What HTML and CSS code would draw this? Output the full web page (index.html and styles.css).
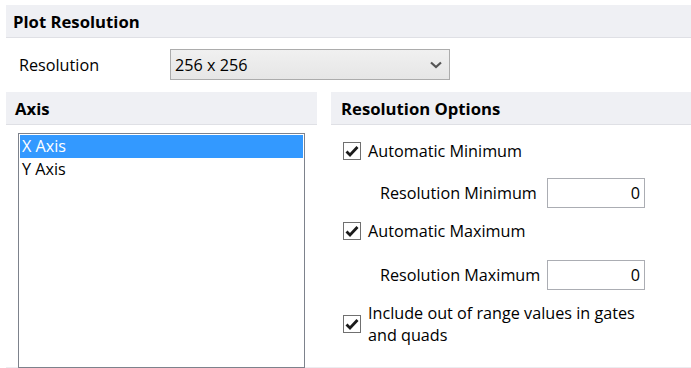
FILE: index.html
```html
<!DOCTYPE html>
<html>
<head>
<meta charset="utf-8">
<link rel="stylesheet" href="styles.css">
</head>
<body>
<div class="panel">
  <div class="hdr hdr-main">Plot Resolution</div>
  <div class="res-row">
    <span class="res-label">Resolution</span>
    <div class="select">
      <span>256 x 256</span>
      <svg class="chev" width="12" height="8" viewBox="0 0 12 8"><path d="M1 1.5 L6 6 L11 1.5" fill="none" stroke="#555" stroke-width="2.2"/></svg>
    </div>
  </div>
  <div class="cols">
    <div class="col-left">
      <div class="hdr hdr-axis">Axis</div>
      <div class="list">
        <div class="item selected">X Axis</div>
        <div class="item">Y Axis</div>
      </div>
    </div>
    <div class="col-right">
      <div class="hdr hdr-opts">Resolution Options</div>
      <div class="check-row r1">
        <span class="box"><svg width="14" height="12" viewBox="0 0 14 12"><path d="M1.5 6.5 L5 10 L12.5 2" fill="none" stroke="#1a1a1a" stroke-width="2.8"/></svg></span>
        <span>Automatic Minimum</span>
      </div>
      <div class="field-row r2">
        <span class="field-label">Resolution Minimum</span>
        <div class="num">0</div>
      </div>
      <div class="check-row r3">
        <span class="box"><svg width="14" height="12" viewBox="0 0 14 12"><path d="M1.5 6.5 L5 10 L12.5 2" fill="none" stroke="#1a1a1a" stroke-width="2.8"/></svg></span>
        <span>Automatic Maximum</span>
      </div>
      <div class="field-row r4">
        <span class="field-label">Resolution Maximum</span>
        <div class="num">0</div>
      </div>
      <div class="check-row r5">
        <span class="box"><svg width="14" height="12" viewBox="0 0 14 12"><path d="M1.5 6.5 L5 10 L12.5 2" fill="none" stroke="#1a1a1a" stroke-width="2.8"/></svg></span>
        <span class="wrap-text">Include out of range values in gates and quads</span>
      </div>
    </div>
  </div>
</div>
</body>
</html>
```

FILE: styles.css
```css
* { box-sizing: border-box; }
html, body { margin: 0; padding: 0; background: #fff; }
body {
  width: 691px;
  height: 368px;
  overflow: hidden;
  font-family: "Open Sans", "Noto Sans", sans-serif;
  font-size: 16.2px;
  color: #000;
}
.panel {
  margin: 5px 0 0 6px;
  height: 363px;
  border-bottom: 1px solid #ececf0;
}
.hdr {
  height: 33px;
  background: #eff0f4;
  border-bottom: 1px solid #dfe0e5;
  font-weight: bold;
  font-size: 16.7px;
  display: flex;
  align-items: center;
}
.hdr-main { padding-left: 7px; }
.hdr-axis { padding-left: 9px; }
.hdr-opts { padding-left: 10px; }
.res-row {
  display: flex;
  align-items: center;
  margin-top: 11px;
  padding-left: 13px;
  height: 31px;
}
.res-label { width: 151px; }
.select {
  width: 280px;
  height: 31px;
  border: 1px solid #acacac;
  background: linear-gradient(#f0f0f0, #e6e6e6);
  display: flex;
  align-items: center;
  justify-content: space-between;
  padding: 0 7px 0 4px;
}
.chev { display: block; }
.cols {
  display: grid;
  grid-template-columns: 311px 360px;
  column-gap: 14px;
  margin-top: 12px;
}
.list {
  margin: 8px 12px 0 12px;
  height: 235px;
  border: 1px solid #7d828c;
  padding: 1px;
}
.item {
  height: 23px;
  line-height: 23px;
  padding-left: 2px;
}
.item.selected { background: #3399ff; color: #fff; }
.col-right { display: flex; flex-direction: column; }
.check-row {
  display: flex;
  align-items: center;
  padding-left: 12px;
}
.box {
  width: 18px;
  height: 18px;
  border: 1px solid #707070;
  background: #fff;
  display: flex;
  align-items: center;
  justify-content: center;
  flex: none;
  margin-right: 7px;
}
.box svg { display: block; }
.r1 { margin-top: 16px; height: 20px; }
.field-row {
  display: flex;
  align-items: center;
  padding-left: 49px;
  height: 30px;
}
.field-label { width: 167px; }
.num {
  width: 98px;
  height: 30px;
  border: 1px solid #abadb3;
  text-align: right;
  padding-right: 4px;
  line-height: 28px;
}
.r2 { margin-top: 17px; }
.r3 { margin-top: 13px; height: 20px; }
.r4 { margin-top: 19px; }
.r5 { margin-top: 12px; }
.wrap-text { width: 285px; line-height: 22px; }
```
